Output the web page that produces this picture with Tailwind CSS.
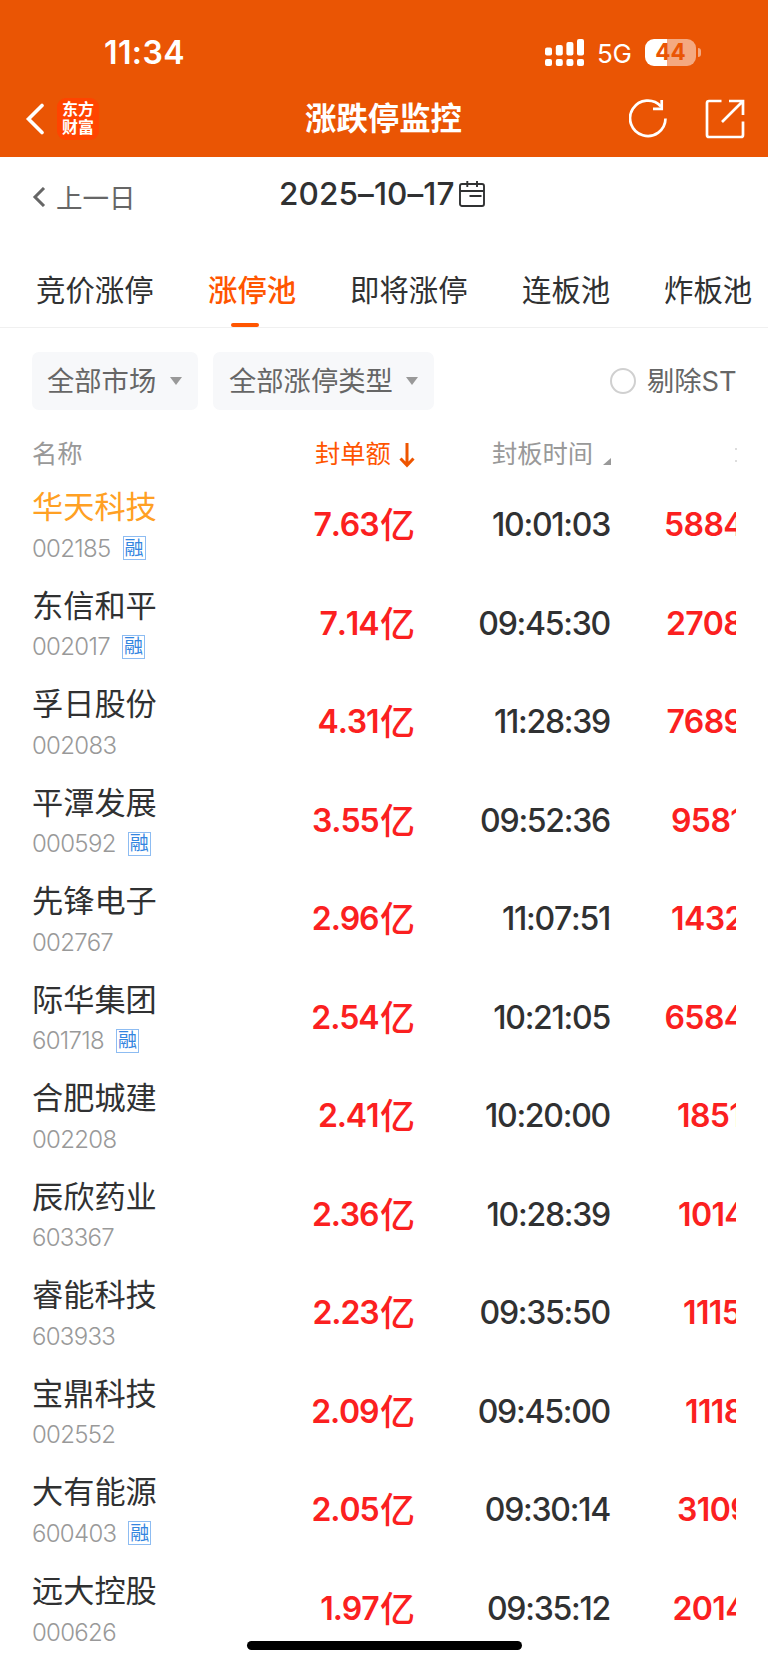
<!DOCTYPE html>
<html lang="zh-CN">
<head>
<meta charset="utf-8">
<title>涨跌停监控</title>
<script src="https://cdn.jsdelivr.net/npm/@tailwindcss/browser@4"></script>
</head>
<body class="bg-white">
<div class="relative flex h-[1665px] w-[768px] flex-col overflow-hidden bg-white font-['Inter','Noto_Sans_CJK_SC',sans-serif] whitespace-nowrap text-[#303132]">
  <header class="h-[157px] shrink-0 bg-[#ea5504] text-white">
    <div class="flex h-[80px] items-center pt-[25px] pl-[104px]">
      <span class="w-[441px] text-[32px] leading-none font-semibold tracking-[0.4px]">11:34</span>
      <svg class="mt-[-2px]" width="40" height="28" viewBox="0 0 40 28" fill="currentColor"><rect x="0" y="9.500" width="7" height="8" rx="2"/><rect x="10.8" y="7" width="7" height="10.500" rx="2"/><rect x="21.4" y="4" width="7" height="13.500" rx="2"/><rect x="32" y="1" width="7" height="16.500" rx="2"/><rect x="0" y="21" width="7" height="7" rx="2"/><rect x="10.8" y="21" width="7" height="7" rx="2"/><rect x="21.4" y="21" width="7" height="7" rx="2"/><rect x="32" y="21" width="7" height="7" rx="2"/></svg>
      <span class="ml-[12px] w-[48px] pt-[2px] text-[26px] leading-none tracking-[-0.2px]">5G</span>
      <div class="flex h-[27px] w-[51px] items-center justify-center rounded-[9px] bg-[linear-gradient(90deg,#fff_44%,#f4a981_44%)] text-[22.500px] leading-none font-bold text-[#ea5504]">44</div>
      <div class="ml-[2px] h-[9px] w-[3px] rounded-r-full bg-[#f4a981]"></div>
    </div>
    <div class="flex h-[77px] items-center">
      <svg class="ml-[25px]" width="20" height="32" viewBox="0 0 20 32" fill="none" stroke="currentColor" stroke-width="3.6" stroke-linecap="round"><path d="M17 2.500 3.5 16l13.500 13.500"/></svg>
      <div class="ml-[12px] flex h-[42px] w-[42px] flex-col items-center justify-center rounded-[9px] bg-[#ff4400] text-[16px] leading-[17.5px] font-bold"><span>东方</span><span>财富</span></div>
      <h1 class="ml-[206px] w-[324px] pt-[2px] text-[31.4px] leading-none font-bold">涨跌停监控</h1>
      <svg width="38" height="40" viewBox="0 0 38 40" fill="none" stroke="currentColor" stroke-width="2.700"><path d="M36.5 19.500A17.700 17.700 0 1 1 32 7.500"/><path d="M32.700 1v8.800h-8.700"/></svg>
      <svg class="ml-[38px]" width="40" height="40" viewBox="0 0 40 40" fill="none" stroke="currentColor" stroke-width="2.700"><path d="M16.5 2H4Q2 2 2 4V36Q2 38 4 38H36Q38 38 38 36V22.500M24 2H38V16M38 2 17 23"/></svg>
    </div>
  </header>

  <div class="flex h-[93px] shrink-0 items-start">
    <svg class="mt-[30px] ml-[32px]" width="14" height="20" viewBox="0 0 14 20" fill="none" stroke="#666" stroke-width="3"><path d="M12 1 3 10l9 9"/></svg>
    <span class="mt-[21px] ml-[10px] w-[223px] text-[26.500px] leading-[40px] text-[#666]">上一日</span>
    <span class="mt-[17px] text-[31.500px] leading-[40px] font-medium tracking-[0.1px]">2025–10–17</span>
    <svg class="mt-[24px] ml-[4px]" width="26" height="26" viewBox="0 0 26 26" fill="none" stroke="#303132" stroke-width="1.900"><rect x="1" y="3" width="24" height="22" rx="2"/><path d="M1 10h24M8.300 0v6M18 0v6M10.500 15h12"/></svg>
  </div>

  <nav class="flex h-[78px] shrink-0 border-b border-[#f0f0f0] text-[29.400px] leading-[82px]">
    <span class="ml-[36px] w-[172px]">竞价涨停</span>
    <span class="relative w-[142px] font-medium text-[#ff5500]">涨停池<i class="absolute top-[73px] left-[23px] h-[4px] w-[28px] rounded-full bg-[#ff5500]"></i></span>
    <span class="w-[172px]">即将涨停</span>
    <span class="w-[142px]">连板池</span>
    <span>炸板池</span>
  </nav>

  <div class="mt-[24px] flex h-[58px] shrink-0 items-center px-[32px] text-[27.300px] text-[#666]">
    <div class="flex h-[58px] w-[166px] items-center rounded-[7px] bg-[#f7f8fa] pl-[15px]"><span class="pt-[2px]">全部市场</span><svg class="ml-[14px]" width="12" height="8" viewBox="0 0 12 8"><path d="M0 0H12L6 8Z" fill="#999"/></svg></div>
    <div class="ml-[15px] flex h-[58px] w-[221px] items-center rounded-[7px] bg-[#f7f8fa] pl-[16px]"><span class="pt-[2px]">全部涨停类型</span><svg class="ml-[13px]" width="12" height="8" viewBox="0 0 12 8"><path d="M0 0H12L6 8Z" fill="#999"/></svg></div>
    <i class="ml-auto h-[26px] w-[26px] rounded-full border-2 border-[#d0d0d0]"></i>
    <span class="ml-[11px] w-[89px] pt-[2px]">剔除ST</span>
  </div>

  <div class="mt-[24px] flex h-[38px] shrink-0 items-center text-[25.300px] leading-none text-[#999]">
    <span class="ml-[32px] w-[283px] pt-[1px]">名称</span>
    <span class="pt-[1px] text-[#ff5500]">封单额</span>
    <svg class="mt-[4px] ml-[8px]" width="16" height="25" viewBox="0 0 16 25" fill="none" stroke="#ee5500" stroke-width="3"><path d="M8 0v22M1.500 15.500 8 22.300l6.500-6.800"/></svg>
    <span class="ml-[77px] pt-[1px]">封板时间</span>
    <svg class="mt-[17px] ml-[10px]" width="8" height="7" viewBox="0 0 8 7"><path d="M8 0V7H0Z" fill="#999"/></svg>
    <span class="mt-[4px] ml-[124px] flex w-[2px] flex-col gap-[10px]"><i class="h-[2px] bg-[#ddd]"></i><i class="h-[2px] bg-[#ddd]"></i></span>
  </div>

  <main id="rows" class="mr-[32px] overflow-hidden pt-[13px]"></main>

  <div class="absolute top-[1641px] left-[247px] h-[9px] w-[275px] rounded-full bg-black"></div>
</div>
<script>
const stocks = [
  ['华天科技','002185',1,'7.63','10:01:03','5884',664],
  ['东信和平','002017',1,'7.14','09:45:30','2708',666],
  ['孚日股份','002083',0,'4.31','11:28:39','7689',666.5],
  ['平潭发展','000592',1,'3.55','09:52:36','9581',671],
  ['先锋电子','002767',0,'2.96','11:07:51','1432',671],
  ['际华集团','601718',1,'2.54','10:21:05','6584',664.5],
  ['合肥城建','002208',0,'2.41','10:20:00','1851',677],
  ['辰欣药业','603367',0,'2.36','10:28:39','1014',678],
  ['睿能科技','603933',0,'2.23','09:35:50','1115',683],
  ['宝鼎科技','002552',0,'2.09','09:45:00','1118',685],
  ['大有能源','600403',1,'2.05','09:30:14','3109',677],
  ['远大控股','000626',0,'1.97','09:35:12','2014',672.5]
];
document.getElementById('rows').innerHTML = stocks.map((s, i) => `
  <div class="flex h-[98.55px] items-start">
    <div class="ml-[32px] w-[200px] shrink-0">
      <div class="text-[31.2px] leading-[44px] ${i ? '' : 'text-[#ffa023]'}">${s[0]}</div>
      <div class="flex h-[38px] items-center text-[24px] leading-none font-light tracking-[-0.7px] text-[#999]"><span class="pt-[1px]">${s[1]}</span>${s[2] ? '<span class="ml-[12px] flex h-[24px] w-[23px] items-center justify-center border border-[#8dbcf2] text-[19px] font-normal tracking-normal text-[#3385e0]">融</span>' : ''}</div>
    </div>
    <div class="flex w-[183px] shrink-0 justify-end pt-[18px] text-[32px] leading-[44px] font-semibold tracking-[-1.1px] text-[#fb2020] [font-kerning:none]"><span>${s[3]}</span><span class="ml-[1.5px] text-[35px] font-medium tracking-normal">亿</span></div>
    <div class="w-[195px] shrink-0 pt-[18px] text-right text-[32px] leading-[44px] font-medium tracking-[-1.25px] [font-kerning:none] [font-feature-settings:'calt'_0]">${s[4]}</div>
    <div class="shrink-0 pt-[18px] text-[32px] leading-[44px] font-semibold tracking-[-0.6px] text-[#fb2020]" style="margin-left:${s[6] - 610}px">${s[5]}</div>
  </div>`).join('');
</script>
</body>
</html>
